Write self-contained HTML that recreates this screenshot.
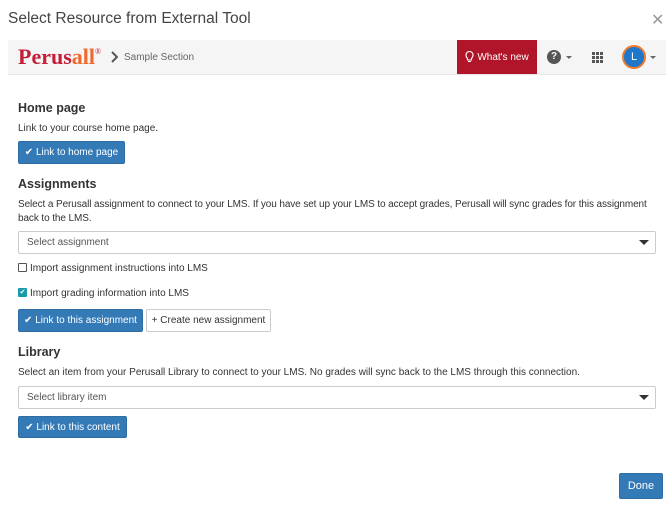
<!DOCTYPE html><html><head><style>
body{margin:0;width:672px;height:510px;background:#fff;font-family:"Liberation Sans",sans-serif;color:#333;position:relative;overflow:hidden}
.a{position:absolute;white-space:nowrap}
.t{font-size:10px}
.h{font-size:12.5px;font-weight:bold;color:#333}
.btn{position:absolute;background:#337ab7;color:#fff;border:1px solid #2e6da4;border-radius:2px;font-size:10px;box-sizing:border-box;display:flex;align-items:center;justify-content:center}
.sel{position:absolute;left:18px;width:638px;height:23px;border:1px solid #ccc;border-radius:2px;box-sizing:border-box;font-size:10px;color:#555;padding:5px 8px}
.sel:after{content:"";position:absolute;right:6px;top:8px;border:5px solid transparent;border-top:5px solid #333;border-bottom:0}
</style></head><body>
<div class="a" style="left:8px;top:10px;font-size:15.5px;color:#444">Select Resource from External Tool</div>
<div class="a" style="left:651px;top:10px;font-size:16px;color:#999">✕</div>
<div class="a" style="left:8px;top:40px;width:658px;height:34px;background:#f5f5f5;border-bottom:1px solid #e6e6e6"></div>
<div class="a" style="left:18px;top:44px;font-family:'Liberation Serif',serif;font-size:22px;font-weight:bold;color:#c41e3a">Perus<span style="color:#ef6a2c">all</span><sup style="font-size:8px;color:#c41e3a;font-weight:normal;vertical-align:10px">®</sup></div>
<svg class="a" style="left:110px;top:51px" width="8" height="12"><path d="M2 1l5 5-5 5" stroke="#555" stroke-width="2" fill="none"/></svg>
<div class="a t" style="left:124px;top:52px;color:#666">Sample Section</div>
<div class="a" style="left:457px;top:40px;width:80px;height:34px;background:#b0152a;color:#fff;font-size:10px;display:flex;align-items:center;justify-content:center"><svg width="9" height="12" style="margin-right:3px"><path d="M2.5 7.5C1 6 1 4.5 1 4a3.5 3.5 0 0 1 7 0c0 .5 0 2-1.5 3.5V9h-4z M3 10.5h3" stroke="#fff" stroke-width="1.1" fill="none"/></svg>What's new</div>
<div class="a" style="left:547px;top:50px;width:14px;height:14px;border-radius:50%;background:#555;color:#fff;font-size:10px;font-weight:bold;text-align:center;line-height:14px">?</div>
<div class="a" style="left:566px;top:56px;border:3px solid transparent;border-top:3px solid #666"></div>
<svg class="a" style="left:592px;top:52px" width="11" height="11"><g fill="#555"><rect x="0" y="0" width="3" height="3"/><rect x="4" y="0" width="3" height="3"/><rect x="8" y="0" width="3" height="3"/><rect x="0" y="4" width="3" height="3"/><rect x="4" y="4" width="3" height="3"/><rect x="8" y="4" width="3" height="3"/><rect x="0" y="8" width="3" height="3"/><rect x="4" y="8" width="3" height="3"/><rect x="8" y="8" width="3" height="3"/></g></svg>
<div class="a" style="left:622px;top:45px;width:20px;height:20px;border-radius:50%;background:#1e77c8;border:2px solid #ef7b2c;color:#fff;font-size:11px;text-align:center;line-height:20px">L</div>
<div class="a" style="left:650px;top:56px;border:3px solid transparent;border-top:3px solid #666"></div>

<div class="a h" style="left:18px;top:101px">Home page</div>
<div class="a t" style="left:18px;top:123px">Link to your course home page.</div>
<div class="btn" style="left:18px;top:141px;width:107px;height:23px">✔ Link to home page</div>

<div class="a h" style="left:18px;top:177px">Assignments</div>
<div class="a t" style="left:18px;top:198px;white-space:normal;width:648px;line-height:14px;letter-spacing:-0.1px">Select a Perusall assignment to connect to your LMS. If you have set up your LMS to accept grades, Perusall will sync grades for this assignment back to the LMS.</div>
<div class="sel" style="top:231px">Select assignment</div>
<div class="a" style="left:18px;top:263px;width:7px;height:7px;border:1px solid #555;border-radius:1px"></div>
<div class="a t" style="left:30px;top:263px">Import assignment instructions into LMS</div>
<div class="a" style="left:18px;top:288px;width:9px;height:9px;background:#1a9aa8;border-radius:1px;color:#fff;font-size:7px;line-height:9px;text-align:center">✔</div>
<div class="a t" style="left:30px;top:288px">Import grading information into LMS</div>
<div class="btn" style="left:18px;top:309px;width:125px;height:23px">✔ Link to this assignment</div>
<div class="btn" style="left:146px;top:309px;width:125px;height:23px;background:#fff;color:#333;border-color:#ccc">+ Create new assignment</div>

<div class="a h" style="left:18px;top:345px">Library</div>
<div class="a t" style="left:18px;top:367px">Select an item from your Perusall Library to connect to your LMS. No grades will sync back to the LMS through this connection.</div>
<div class="sel" style="top:386px">Select library item</div>
<div class="btn" style="left:18px;top:416px;width:109px;height:22px">✔ Link to this content</div>

<div class="btn" style="left:619px;top:473px;width:44px;height:26px;font-size:11px">Done</div>
</body></html>
